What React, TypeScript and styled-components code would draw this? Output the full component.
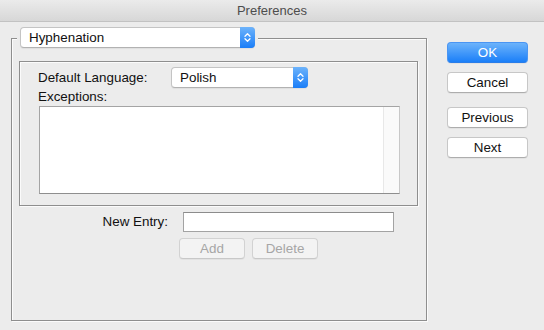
import React from "react";
import styled, { createGlobalStyle } from "styled-components";

const GlobalStyle = createGlobalStyle`
  html, body {
    margin: 0;
    padding: 0;
    background: #ececec;
  }
  body {
    font-family: "Liberation Sans", Arial, sans-serif;
    font-size: 13.4px;
    color: #111;
  }
`;

const Window = styled.div`
  width: 544px;
  height: 330px;
  background: #ececec;
  overflow: hidden;
  display: flex;
  flex-direction: column;
`;

const TitleBar = styled.div`
  height: 21px;
  border-bottom: 1px solid #c2c2c2;
  background: linear-gradient(#ebebeb, #d7d7d7);
  display: flex;
  align-items: center;
  justify-content: center;
  color: #4d4d4d;
  font-size: 13px;
`;

const Body = styled.div`
  display: flex;
  align-items: flex-start;
`;

const GroupBox = styled.div`
  margin: 16px 0 0 11px;
  width: 414px;
  height: 281px;
  border: 1px solid #8e8e8e;
  box-shadow: 1px 1px 0 #fbfbfb, inset 1px 1px 0 #fbfbfb;
  display: flex;
  flex-direction: column;
`;

const Legend = styled.div`
  align-self: flex-start;
  margin: -12px 0 0 5px;
  padding: 0 3px;
  background: #ececec;
`;

const Popup = styled.div<{ $width: number }>`
  width: ${(p) => p.$width}px;
  height: 21px;
  box-sizing: border-box;
  display: flex;
  background: #fff;
  border: 1px solid #c4c4c4;
  border-bottom-color: #b2b2b2;
  border-radius: 4px;
  box-shadow: 0 1px 1px rgba(0, 0, 0, 0.06);
`;

const PopupLabel = styled.span`
  flex: 1;
  padding-left: 8px;
  line-height: 19px;
`;

const PopupArrows = styled.span`
  width: 15px;
  margin: -1px -1px -1px 0;
  border-radius: 0 4px 4px 0;
  background: linear-gradient(#6db3fb, #1a7ef8);
  display: flex;
  align-items: center;
  justify-content: center;
`;

const InnerBox = styled.div`
  margin: 13px 0 0 7px;
  width: 397px;
  height: 143px;
  border: 1px solid #8e8e8e;
  box-shadow: 1px 1px 0 #fbfbfb, inset 1px 1px 0 #fbfbfb;
  display: flex;
  flex-direction: column;
`;

const LangRow = styled.div`
  display: flex;
  align-items: center;
  margin-top: 5px;
  padding-left: 18px;
`;

const FieldLabel = styled.span<{ $width?: number }>`
  width: ${(p) => (p.$width ? `${p.$width}px` : "auto")};
  line-height: 16px;
`;

const ExceptionsLabel = styled.div`
  margin-top: 1px;
  padding-left: 18px;
  line-height: 16px;
`;

const ListArea = styled.div`
  margin: 1px 0 0 19px;
  width: 361px;
  height: 88px;
  box-sizing: border-box;
  display: flex;
  background: #fff;
  border: 1px solid #a4a4a4;
  border-right-color: #c8c8c8;
  border-bottom-color: #8e8e8e;
`;

const ListBody = styled.div`
  flex: 1;
`;

const ScrollTrack = styled.div`
  width: 15px;
  background: #fafafa;
  border-left: 1px solid #e8e8e8;
`;

const EntryRow = styled.div`
  display: flex;
  align-items: center;
  gap: 15px;
  margin-top: 6px;
`;

const EntryLabel = styled.span`
  width: 156px;
  text-align: right;
  line-height: 16px;
`;

const EntryInput = styled.div`
  width: 211px;
  height: 20px;
  box-sizing: border-box;
  background: #fff;
  border: 1px solid #a3a3a3;
  border-top-color: #8c8c8c;
`;

const ButtonRow = styled.div`
  display: flex;
  gap: 7px;
  margin-top: 6px;
  padding-left: 167px;
`;

const ButtonColumn = styled.div`
  display: flex;
  flex-direction: column;
  margin: 20px 0 0 20px;
  width: 81px;
`;

const PushButton = styled.div<{ $primary?: boolean; $disabled?: boolean; $width?: number; $gap?: number }>`
  width: ${(p) => (p.$width ? `${p.$width}px` : "100%")};
  height: 21px;
  box-sizing: border-box;
  margin-top: ${(p) => p.$gap ?? 0}px;
  display: flex;
  align-items: center;
  justify-content: center;
  border-radius: 4px;
  font-size: 13.4px;
  border: 1px solid
    ${(p) => (p.$primary ? "#4a95f3" : p.$disabled ? "#d2d2d2" : "#c7c7c7")};
  border-bottom-color: ${(p) =>
    p.$primary ? "#2a7de9" : p.$disabled ? "#c8c8c8" : "#adadad"};
  background: ${(p) =>
    p.$primary
      ? "linear-gradient(#6cb3fb, #1b7ff8)"
      : p.$disabled
      ? "#f3f3f3"
      : "#ffffff"};
  color: ${(p) => (p.$primary ? "#ffffff" : p.$disabled ? "#a6a6a6" : "#111")};
  box-shadow: 0 1px 0 rgba(0, 0, 0, 0.04);
`;

const Chevrons = () => (
  <svg width="7" height="11" viewBox="0 0 7 11" fill="none">
    <path d="M1 4.2 L3.5 1.7 L6 4.2" stroke="#fff" strokeWidth="1.3" strokeLinecap="round" strokeLinejoin="round" />
    <path d="M1 6.8 L3.5 9.3 L6 6.8" stroke="#fff" strokeWidth="1.3" strokeLinecap="round" strokeLinejoin="round" />
  </svg>
);

const PopupButton = ({ label, width }: { label: string; width: number }) => (
  <Popup $width={width}>
    <PopupLabel>{label}</PopupLabel>
    <PopupArrows>
      <Chevrons />
    </PopupArrows>
  </Popup>
);

const App = () => {
  return (
    <Window>
      <GlobalStyle />
      <TitleBar>Preferences</TitleBar>
      <Body>
        <GroupBox>
          <Legend>
            <PopupButton label="Hyphenation" width={235} />
          </Legend>
          <InnerBox>
            <LangRow>
              <FieldLabel $width={133}>Default Language:</FieldLabel>
              <PopupButton label="Polish" width={137} />
            </LangRow>
            <ExceptionsLabel>Exceptions:</ExceptionsLabel>
            <ListArea>
              <ListBody />
              <ScrollTrack />
            </ListArea>
          </InnerBox>
          <EntryRow>
            <EntryLabel>New Entry:</EntryLabel>
            <EntryInput />
          </EntryRow>
          <ButtonRow>
            <PushButton $disabled $width={66}>Add</PushButton>
            <PushButton $disabled $width={66}>Delete</PushButton>
          </ButtonRow>
        </GroupBox>
        <ButtonColumn>
          <PushButton $primary>OK</PushButton>
          <PushButton $gap={9}>Cancel</PushButton>
          <PushButton $gap={14}>Previous</PushButton>
          <PushButton $gap={9}>Next</PushButton>
        </ButtonColumn>
      </Body>
    </Window>
  );
};

export default App;
